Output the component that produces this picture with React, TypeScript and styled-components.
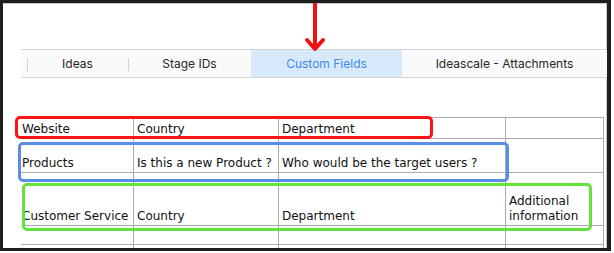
import React from "react";
import styled, { createGlobalStyle } from "styled-components";

const GlobalStyle = createGlobalStyle`
  html, body {
    margin: 0;
    padding: 0;
    background: #ffffff;
  }
  body {
    width: 614px;
    height: 253px;
    overflow: hidden;
  }
`;

const Frame = styled.div`
  position: relative;
  box-sizing: border-box;
  width: 611px;
  height: 251px;
  border: 3px solid #1e1e1e;
  border-right-width: 4px;
  overflow: hidden;
  background: #ffffff;
  box-shadow: inset 0 1px 0 #cacaca, inset -1px 0 0 #cacaca;
  display: flex;
  flex-direction: column;
  & > * {
    flex-shrink: 0;
  }
`;

const TabBar = styled.div`
  display: flex;
  height: 27px;
  margin: 46px 0 0 18px;
  padding-left: 6px;
  border-top: 1px solid #d4d4d4;
  border-bottom: 1px solid #d4d4d4;
  background: #fafafa;
`;

const Tab = styled.div<{ $width?: number; $active?: boolean; $divider?: boolean }>`
  position: relative;
  flex: ${(p) => (p.$width ? `0 0 ${p.$width}px` : "1 1 auto")};
  display: flex;
  align-items: center;
  justify-content: center;
  font-family: Inter, "Liberation Sans", sans-serif;
  font-size: 12px;
  color: ${(p) => (p.$active ? "#3d8af0" : "#262626")};
  background: ${(p) => (p.$active ? "#d8e9fc" : "transparent")};

  &::before {
    content: "";
    display: ${(p) => (p.$divider ? "block" : "none")};
    position: absolute;
    left: 0;
    top: 8px;
    width: 1px;
    height: 13px;
    background: #d0d0d0;
  }
`;

const Grid = styled.div`
  display: grid;
  grid-template-columns: 113px 145px 227px 98px;
  grid-template-rows: 21px 34px 53px 19px 26px;
  margin: 39px 0 0 18px;
  width: 583px;
  border-top: 1px solid #ababab;
`;

const Cell = styled.div<{ $first?: boolean }>`
  box-sizing: border-box;
  display: flex;
  align-items: flex-end;
  padding: 0 0 1px ${(p) => (p.$first ? 1 : 3)}px;
  border-right: 1px solid #ababab;
  border-bottom: 1px solid #ababab;
  font-family: "DejaVu Sans", Verdana, sans-serif;
  font-size: 12px;
  line-height: 15px;
  color: #111111;
  white-space: normal;
`;

const Mark = styled.div<{ $color: string; $x: number; $y: number; $w: number; $h: number }>`
  position: absolute;
  box-sizing: border-box;
  left: ${(p) => p.$x}px;
  top: ${(p) => p.$y}px;
  width: ${(p) => p.$w}px;
  height: ${(p) => p.$h}px;
  border: 3px solid ${(p) => p.$color};
  border-radius: 5px;
  pointer-events: none;
`;

const Arrow = styled.svg`
  position: absolute;
  left: 300px;
  top: -3px;
  z-index: 2;
`;

const rows: string[][] = [
  ["Website", "Country", "Department", ""],
  ["Products", "Is this a new Product ?", "Who would be the target users ?", ""],
  ["Customer Service", "Country", "Department", "Additional information"],
  ["", "", "", ""],
  ["", "", "", ""],
];

const App: React.FC = () => {
  return (
    <>
      <GlobalStyle />
      <Frame>
        <TabBar>
          <Tab $width={101} $divider>Ideas</Tab>
          <Tab $width={123} $divider>Stage IDs</Tab>
          <Tab $width={151} $active>Custom Fields</Tab>
          <Tab>Ideascale - Attachments</Tab>
        </TabBar>

        <Grid>
          {rows.map((row, r) =>
            row.map((text, c) => (
              <Cell key={`${r}-${c}`} $first={c === 0}>
                {text}
              </Cell>
            ))
          )}
        </Grid>

        <Mark $color="#fb1414" $x={12} $y={113} $w={418} $h={23} />
        <Mark $color="#5a8ee6" $x={15} $y={139} $w={491} $h={40} />
        <Mark $color="#63e23c" $x={19} $y={180} $w={570} $h={48} />

        <Arrow width="24" height="56" viewBox="0 0 24 56">
          <line x1="12" y1="0" x2="12" y2="48" stroke="#f01212" strokeWidth="4" />
          <polyline
            points="4,40 12,49 20,40"
            fill="none"
            stroke="#f01212"
            strokeWidth="4"
            strokeLinecap="round"
            strokeLinejoin="round"
          />
        </Arrow>
      </Frame>
    </>
  );
};

export default App;
